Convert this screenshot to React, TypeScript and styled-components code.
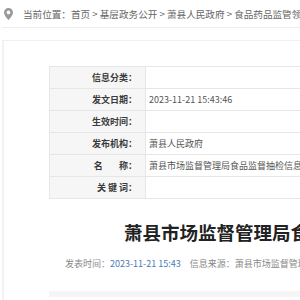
import React from "react";
import styled, { createGlobalStyle } from "styled-components";

const GlobalStyle = createGlobalStyle`
  html, body {
    margin: 0;
    padding: 0;
    background: #fff;
    overflow: hidden;
  }
  body {
    font-family: "Noto Sans CJK SC", "Noto Sans", sans-serif;
  }
`;

const Page = styled.div`
  width: 1000px;
`;

const Crumbs = styled.div`
  display: flex;
  align-items: center;
  height: 27px;
  padding-left: 4px;
  margin-left: 2px;
  border-bottom: 1px solid #ededed;
  font-size: 9.6px;
  color: #666;
  white-space: nowrap;
`;

const Pin = styled.svg`
  width: 9px;
  height: 12px;
  margin-right: 10px;
  margin-left: -2px;
`;

const Box = styled.div`
  margin: 12px 0 0 2px;
  border-top: 1px solid #f0f0f0;
  border-left: 2px solid #f2f2f2;
  padding: 25px 0 0 45px;
  height: 300px;
`;

const InfoTable = styled.table`
  border-collapse: collapse;
  width: 800px;
  font-size: 9px;
`;

const Label = styled.td`
  width: 87px;
  height: 21px;
  padding: 0 8px 0 0;
  text-align: right;
  background: #f6f6f6;
  border: 1px solid #e6e6e6;
  font-weight: bold;
  color: #3a3a3a;
  white-space: pre;
`;

const Value = styled.td`
  padding: 0 0 0 3px;
  border: 1px solid #e6e6e6;
  color: #555;
  white-space: nowrap;
`;

const Title = styled.h1`
  margin: 0;
  padding: 20px 0 0 75px;
  font-size: 18.5px;
  font-weight: bold;
  color: #222;
  line-height: 26px;
  white-space: nowrap;
`;

const Meta = styled.div`
  display: flex;
  gap: 9px;
  padding: 12px 0 0 16px;
  font-size: 9px;
  color: #888;
  white-space: nowrap;
`;

const Blue = styled.span`
  color: #4a7ab8;
`;

const Bar = styled.div`
  margin-top: 21px;
  height: 6px;
  background: #f5f5f5;
`;

const rows: [string, string][] = [
  ["信息分类：", ""],
  ["发文日期：", "2023-11-21 15:43:46"],
  ["生效时间：", ""],
  ["发布机构：", "萧县人民政府"],
  ["名        称：", "萧县市场监督管理局食品监督抽检信息（2023年第十一期）"],
  ["关 键 词：", ""],
];

export default function App() {
  return (
    <Page>
      <GlobalStyle />
      <Crumbs>
        <Pin viewBox="0 0 12 16">
          <path
            d="M6 0C2.7 0 0 2.6 0 5.9 0 10.2 6 16 6 16s6-5.8 6-10.1C12 2.6 9.3 0 6 0zm0 8.4A2.5 2.5 0 1 1 6 3.4a2.5 2.5 0 0 1 0 5z"
            fill="#9a9a9a"
          />
        </Pin>
        当前位置：首页 &gt; 基层政务公开 &gt; 萧县人民政府 &gt; 食品药品监管领域
      </Crumbs>
      <Box>
        <InfoTable>
          <tbody>
            {rows.map(([k, v]) => (
              <tr key={k}>
                <Label>{k}</Label>
                <Value>{v}</Value>
              </tr>
            ))}
          </tbody>
        </InfoTable>
        <Title>萧县市场监督管理局食品监督抽检信息</Title>
        <Meta>
          <span>
            发表时间：<Blue>2023-11-21 15:43</Blue>
          </span>
          <span>信息来源：萧县市场监督管理局</span>
        </Meta>
        <Bar />
      </Box>
    </Page>
  );
}
